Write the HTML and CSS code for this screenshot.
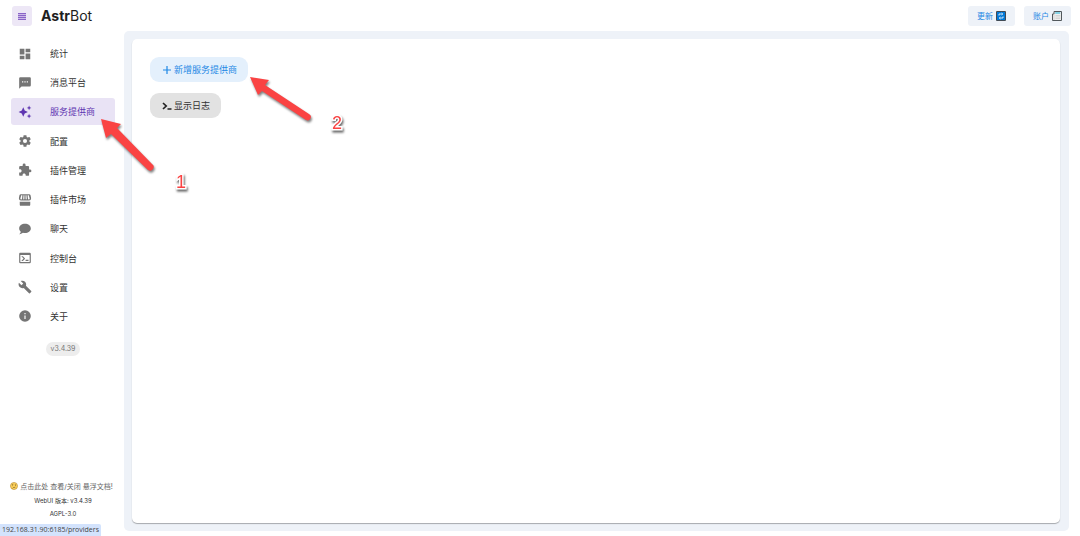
FILE: index.html
```
<!DOCTYPE html>
<html lang="zh-CN">

<head>
    <meta charset="UTF-8">
    <meta name="viewport" content="width=device-width, initial-scale=1.0">
    <title>AstrBot</title>
    <link rel="stylesheet" href="styles.css">
</head>

<body>
    <header class="topbar">
        <button class="menu-button" aria-label="菜单">
            <svg viewBox="0 0 10 10"><path d="M1 2h8v1H1zM1 4h8v1H1zM1 6h8v1H1zM1 8h8v1H1z" fill="#8a63c8" /><path d="M1 2h8v7H1z" fill="#8a63c8" opacity=".35" /></svg>
        </button>
        <div class="brand"><b>Astr</b>Bot</div>
        <div class="top-actions">
            <button class="top-button">更新
                <svg viewBox="0 0 10 10">
                    <rect width="10" height="10" rx="1" fill="#424b55" />
                    <rect x="1" y="1" width="8" height="8" fill="#0078d7" />
                    <path d="M3 4.6V3h3.2M7 5.4V7H3.8M5.6 2l1.2 1-1.2 1M4.4 6L3.2 7l1.2 1" fill="none" stroke="#fff" stroke-width=".8" />
                </svg>
            </button>
            <button class="top-button">账户
                <svg viewBox="0 0 10 10">
                    <path d="M2 .5h7.5v9H.5V3H2z" fill="#eee" stroke="#52585c" />
                    <path d="M3.2 2h5" stroke="#55c3df" stroke-width="1.4" />
                    <path d="M2 3v6M3.5 4.5h4.8M3.5 6h4.8M3.5 7.5h4.8" stroke="#c5c5c5" stroke-width=".6" />
                </svg>
            </button>
        </div>
    </header>

    <div class="layout">
        <aside class="sidebar">
            <nav class="nav">
                <a class="nav-item" href="#">
                    <svg viewBox="0 0 24 24"><path d="M13,3V9H21V3M13,21H21V11H13M3,21H11V15H3M3,13H11V3H3V13Z" /></svg>
                    统计
                </a>
                <a class="nav-item" href="#">
                    <svg viewBox="0 0 24 24"><path d="M17,11H15V9H17M13,11H11V9H13M9,11H7V9H9M20,2H4A2,2 0 0,0 2,4V22L6,18H20A2,2 0 0,0 22,16V4C22,2.89 21.1,2 20,2Z" /></svg>
                    消息平台
                </a>
                <a class="nav-item active" href="#">
                    <svg viewBox="0 0 24 24"><path d="M9 4L11.5 9.5L17 12L11.5 14.5L9 20L6.5 14.5L1 12L6.5 9.5ZM19 1L20.2 3.8L23 5L20.2 6.2L19 9L17.8 6.2L15 5L17.8 3.8ZM19 15L20.2 17.8L23 19L20.2 20.2L19 23L17.8 20.2L15 19L17.8 17.8Z" /></svg>
                    服务提供商
                </a>
                <a class="nav-item" href="#">
                    <svg viewBox="0 0 24 24"><path d="M12,15.5A3.5,3.5 0 0,1 8.5,12A3.5,3.5 0 0,1 12,8.5A3.5,3.5 0 0,1 15.5,12A3.5,3.5 0 0,1 12,15.5M19.43,12.97C19.47,12.65 19.5,12.33 19.5,12C19.5,11.67 19.47,11.34 19.43,11L21.54,9.37C21.73,9.22 21.78,8.95 21.66,8.73L19.66,5.27C19.54,5.05 19.27,4.96 19.05,5.05L16.56,6.05C16.04,5.66 15.5,5.32 14.87,5.07L14.5,2.42C14.46,2.18 14.25,2 14,2H10C9.75,2 9.54,2.18 9.5,2.42L9.13,5.07C8.5,5.32 7.96,5.66 7.44,6.05L4.95,5.05C4.73,4.96 4.46,5.05 4.34,5.27L2.34,8.73C2.21,8.95 2.27,9.22 2.46,9.37L4.57,11C4.53,11.34 4.5,11.67 4.5,12C4.5,12.33 4.53,12.65 4.57,12.97L2.46,14.63C2.27,14.78 2.21,15.05 2.34,15.27L4.34,18.73C4.46,18.95 4.73,19.03 4.95,18.95L7.44,17.94C7.96,18.34 8.5,18.68 9.13,18.93L9.5,21.58C9.54,21.82 9.75,22 10,22H14C14.25,22 14.46,21.82 14.5,21.58L14.87,18.93C15.5,18.67 16.04,18.34 16.56,17.94L19.05,18.95C19.27,19.03 19.54,18.95 19.66,18.73L21.66,15.27C21.78,15.05 21.73,14.78 21.54,14.63L19.43,12.97Z" /></svg>
                    配置
                </a>
                <a class="nav-item" href="#">
                    <svg viewBox="0 0 24 24"><path d="M20.5,11H19V7C19,5.89 18.1,5 17,5H13V3.5A2.5,2.5 0 0,0 10.5,1A2.5,2.5 0 0,0 8,3.5V5H4A2,2 0 0,0 2,7V10.8H3.5C5,10.8 6.2,12 6.2,13.5C6.2,15 5,16.2 3.5,16.2H2V20A2,2 0 0,0 4,22H7.8V20.5C7.8,19 9,17.8 10.5,17.8C12,17.8 13.2,19 13.2,20.5V22H17A2,2 0 0,0 19,20V16H20.5A2.5,2.5 0 0,0 23,13.5A2.5,2.5 0 0,0 20.5,11Z" /></svg>
                    插件管理
                </a>
                <a class="nav-item" href="#">
                    <svg viewBox="0 0 24 24"><path fill-rule="evenodd" d="M5 2H19Q21 2 21.5 4L22.5 9Q22.5 13 19 13H5Q1.500 13 1.500 9L2.500 4Q3 2 5 2ZM5.500 4L4 9.500Q4 11 5.500 11T7 9.500L7.500 4ZM9.500 4L9 9.500Q9 11 10 11T11 9.500V4ZM13 4V9.500Q13 11 14 11T15 9.500L14.500 4ZM16.500 4L17 9.500Q17 11 18.500 11T20 9.500L18.500 4ZM3 15H21V20Q21 22 19 22H5Q3 22 3 20Z" /></svg>
                    插件市场
                </a>
                <a class="nav-item" href="#">
                    <svg viewBox="0 0 24 24"><path d="M12,3C17.5,3 22,6.58 22,11C22,15.42 17.5,19 12,19C10.76,19 9.57,18.82 8.47,18.5C5.55,21 2,21 2,21C4.33,18.67 4.7,17.1 4.75,16.5C3.05,15.07 2,13.13 2,11C2,6.58 6.5,3 12,3Z" /></svg>
                    聊天
                </a>
                <a class="nav-item" href="#">
                    <svg viewBox="0 0 24 24"><path d="M20,19V7H4V19H20M20,3A2,2 0 0,1 22,5V19A2,2 0 0,1 20,21H4A2,2 0 0,1 2,19V5C2,3.89 2.9,3 4,3H20M13,17V15H18V17H13M9.58,13L5.57,9H8.4L11.7,12.3C12.09,12.69 12.09,13.33 11.7,13.72L8.42,17H5.59L9.58,13Z" /></svg>
                    控制台
                </a>
                <a class="nav-item" href="#">
                    <svg viewBox="0 0 24 24"><path d="M22.7,19L13.6,9.9C14.5,7.6 14,4.9 12.1,3C10.1,1 7.1,0.6 4.7,1.7L9,6L6,9L1.6,4.7C0.4,7.1 0.9,10.1 2.9,12.1C4.8,14 7.5,14.5 9.8,13.6L18.9,22.7C19.3,23.1 19.9,23.1 20.3,22.7L22.6,20.4C23.1,20 23.1,19.3 22.7,19Z" /></svg>
                    设置
                </a>
                <a class="nav-item" href="#">
                    <svg viewBox="0 0 24 24"><path d="M13,9H11V7H13M13,17H11V11H13M12,2A10,10 0 0,0 2,12A10,10 0 0,0 12,22A10,10 0 0,0 22,12A10,10 0 0,0 12,2Z" /></svg>
                    关于
                </a>
            </nav>
            <span class="version-chip">v3.4.39</span>

            <div class="sidebar-footer">
                <button class="doc-toggle">
                    <svg viewBox="0 0 10 10">
                        <circle cx="5" cy="5" r="4.4" fill="#ffd35a" stroke="#b28a3c" stroke-width=".8" />
                        <path d="M2.4 3.4l1.8-.6M6 3.4h1.6" stroke="#6d5226" stroke-width=".7" />
                        <circle cx="3.4" cy="4.6" r=".6" fill="#6d5226" />
                        <circle cx="6.8" cy="4.6" r=".6" fill="#6d5226" />
                        <path d="M3.2 8q.4-1.600 3.400-1.400" fill="none" stroke="#6d5226" stroke-width=".8" />
                    </svg>
                    点击此处 查看/关闭 悬浮文档!
                </button>
                <small>WebUI 版本: v3.4.39</small>
                <small>AGPL-3.0</small>
            </div>
        </aside>

        <main class="content">
            <section class="card">
                <button class="action-button add">
                    <svg viewBox="0 0 10 10"><path d="M5 1v8M1 5h8" stroke="#1e88e5" stroke-width="1.2" /></svg>
                    新增服务提供商
                </button>
                <button class="action-button log">
                    <svg viewBox="0 0 10 10"><path d="M1 2l3.200 3L1 8M5.500 8h4" fill="none" stroke="#222" stroke-width="1.700" /></svg>
                    显示日志
                </button>
            </section>
        </main>
    </div>

    <div class="status-url">192.168.31.90:6185/providers</div>

    <!-- step markers -->
    <svg class="arrow arrow-one" viewBox="0 0 60 60">
        <path d="M4 4L24 9L20 13L55 49A3 3 0 0 1 51 55L14 19L9 23Z" />
    </svg>
    <span class="step step-one">1</span>
    <svg class="arrow arrow-two" viewBox="0 0 70 60">
        <path d="M3 5L22 8L18 13L62 42A3 3 0 0 1 59 48L15 19L11 23Z" />
    </svg>
    <span class="step step-two">2</span>
</body>

</html>
```

FILE: styles.css
```
* {
    box-sizing: border-box;
}

body {
    margin: 0;
    min-height: 100vh;
    display: flex;
    flex-direction: column;
    background-color: #fff;
    color: #333;
    font-family: Inter, "Noto Sans CJK SC", sans-serif;
    font-size: 9px;
    position: relative;
}

button {
    border: none;
    font-family: inherit;
    cursor: pointer;
}

/* top bar */
.topbar {
    display: flex;
    align-items: center;
    height: 31px;
    padding: 0 9px 0 12px;
}

.menu-button {
    display: flex;
    align-items: center;
    justify-content: center;
    width: 20px;
    height: 20px;
    padding: 0;
    border-radius: 3px;
    background-color: #ede7f6;
}

.menu-button svg {
    width: 10px;
    height: 10px;
}

.brand {
    margin-left: 9px;
    color: #1e1e1e;
    font-size: 14px;
}

.top-actions {
    display: flex;
    gap: 9px;
    margin-left: auto;
}

.top-button {
    display: flex;
    align-items: center;
    gap: 3px;
    height: 20px;
    padding: 0 9px;
    border-radius: 3px;
    background-color: #eef2f8;
    color: #1e88e5;
    font-size: 8px;
}

.top-button svg {
    width: 10px;
    height: 10px;
}

/* page */
.layout {
    display: flex;
    flex: 1;
    padding: 0 11px 5px 0;
}

.sidebar {
    display: flex;
    flex-direction: column;
    align-items: center;
    width: 124px;
    padding: 9px 9px 0 11px;
}

.nav {
    display: flex;
    flex-direction: column;
    justify-content: space-between;
    align-self: stretch;
    height: 290px;
}

.nav-item {
    display: flex;
    align-items: center;
    gap: 18px;
    height: 27px;
    padding-left: 7px;
    border-radius: 3px;
    color: #333;
    text-decoration: none;
}

.nav-item svg {
    width: 14px;
    height: 14px;
    fill: #757575;
}

.nav-item.active {
    background-color: #e9e3f5;
    color: #5e35b1;
}

.nav-item.active svg {
    fill: #5e35b1;
}

.version-chip {
    margin-top: 12px;
    padding: 0 5px;
    border-radius: 8px;
    background-color: #ededed;
    color: #757575;
    font-size: 7px;
    line-height: 14px;
}

.sidebar-footer {
    display: flex;
    flex-direction: column;
    align-items: center;
    margin-top: auto;
    padding-bottom: 11px;
    font-size: 6px;
    white-space: nowrap;
}

.sidebar-footer small {
    font-size: 6px;
    line-height: 13px;
}

.doc-toggle {
    display: flex;
    align-items: center;
    gap: 2px;
    margin-bottom: 3px;
    padding: 0 3px 0 0;
    background: none;
    color: #666;
    font-size: 7px;
}

.doc-toggle svg {
    width: 8px;
    height: 8px;
}

.content {
    display: flex;
    flex: 1;
    padding: 8px 9px 8px 8px;
    border-radius: 5px;
    background-color: #eef2f8;
}

.card {
    display: flex;
    flex: 1;
    flex-direction: column;
    align-items: flex-start;
    gap: 11px;
    padding: 18px;
    border-radius: 5px;
    background-color: #fff;
    box-shadow: 0 1px 1px rgba(0, 0, 0, 0.3);
}

.action-button {
    display: flex;
    align-items: center;
    gap: 2px;
    height: 25px;
    padding: 0 11px 0 12px;
    border-radius: 9px;
    font-size: 9px;
}

.action-button svg {
    width: 10px;
    height: 10px;
}

.action-button.add {
    background-color: #e4f0fc;
    color: #1e88e5;
}

.action-button.log {
    background-color: #e2e2e2;
    color: #333;
}

/* link preview in the bottom corner */
.status-url {
    position: absolute;
    left: 0;
    bottom: 0;
    padding: 0 2px;
    border-radius: 0 2px 0 0;
    background-color: #d3e3fd;
    color: #444;
    font-family: "Open Sans", sans-serif;
    font-size: 7px;
    line-height: 12px;
}

/* arrows and step numbers */
.arrow {
    position: absolute;
    fill: #fa4343;
    filter: drop-shadow(1px 2px 1px rgba(0, 0, 0, 0.5));
}

.arrow-one {
    left: 97px;
    top: 115px;
    width: 60px;
    height: 60px;
}

.arrow-two {
    left: 247px;
    top: 72px;
    width: 70px;
    height: 60px;
}

.step {
    position: absolute;
    color: #fa4343;
    font-family: "Liberation Sans", sans-serif;
    font-size: 18px;
    line-height: 20px;
    -webkit-text-stroke: 3px #fff;
    paint-order: stroke fill;
    filter: drop-shadow(1px 2px 1px rgba(0, 0, 0, 0.6));
}

.step-one {
    left: 176px;
    top: 172px;
}

.step-two {
    left: 332px;
    top: 113px;
}
```
